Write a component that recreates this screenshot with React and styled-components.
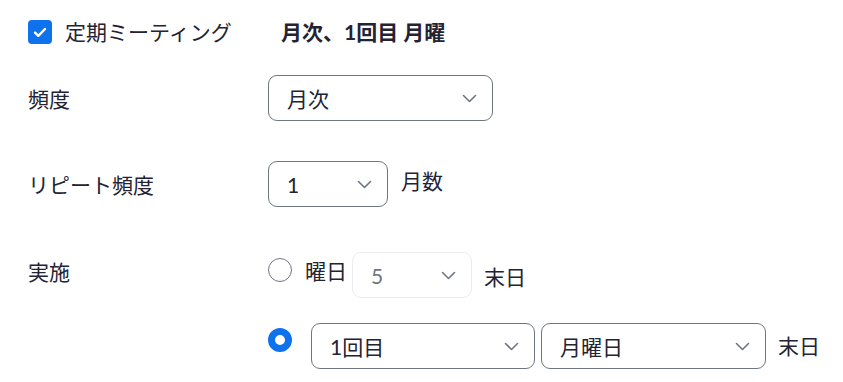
import React from "react";
import styled, { createGlobalStyle } from "styled-components";

const Global = createGlobalStyle`
  html, body { margin: 0; padding: 0; background: #ffffff; }
  body {
    font-family: Lato, "Noto Sans CJK JP", "Noto Sans", sans-serif;
    color: #232333;
    -webkit-font-smoothing: antialiased;
  }
`;

const FS = 21;

const Page = styled.div`
  padding: 20px 0 0 28px;
  display: flex;
  flex-direction: column;
`;

const TopRow = styled.div`
  display: flex;
  align-items: center;
  height: 24px;
`;

const CheckGroup = styled.label`
  display: flex;
  align-items: center;
  width: 253px;
  gap: 13px;
  font-size: ${FS}px;
  line-height: 24px;
`;

const CheckBox = styled.span`
  width: 24px;
  height: 24px;
  border-radius: 4px;
  background: #0e72ed;
  display: flex;
  align-items: center;
  justify-content: center;
  flex-shrink: 0;
`;

const Summary = styled.span`
  font-size: ${FS}px;
  font-weight: 700;
  line-height: 24px;
`;

const FormRow = styled.div`
  display: flex;
  align-items: flex-start;
  margin-top: ${(p) => p.$top}px;
`;

const Label = styled.div`
  width: 240px;
  flex-shrink: 0;
  font-size: ${FS}px;
  line-height: 28px;
  margin-top: ${(p) => p.$offset || 0}px;
`;

const Content = styled.div`
  display: flex;
  flex-direction: column;
  gap: 25px;
`;

const Line = styled.div`
  display: flex;
  align-items: flex-start;
`;

const SelectBox = styled.div`
  box-sizing: border-box;
  width: ${(p) => p.$w}px;
  height: 46px;
  border: 1px solid ${(p) => (p.$disabled ? "#ececf0" : "#6e7680")};
  border-radius: 9px;
  display: flex;
  align-items: center;
  justify-content: space-between;
  padding: 0 15px 0 18px;
  font-size: ${FS}px;
  color: ${(p) => (p.$disabled ? "#6e7680" : "#232333")};
  margin-right: ${(p) => p.$mr || 0}px;
  flex-shrink: 0;
`;

const Text = styled.span`
  font-size: ${FS}px;
  line-height: 28px;
  margin-top: ${(p) => p.$top || 0}px;
  margin-right: ${(p) => p.$mr || 0}px;
  white-space: nowrap;
`;

const Radio = styled.span`
  box-sizing: border-box;
  width: 24px;
  height: 24px;
  border-radius: 50%;
  flex-shrink: 0;
  border: ${(p) => (p.$checked ? "7px solid #0e72ed" : "1.5px solid #6e7680")};
  background: #fff;
  margin-top: ${(p) => p.$top || 0}px;
  margin-right: ${(p) => p.$mr || 0}px;
`;

const Chevron = () => (
  <svg width="15" height="9" viewBox="0 0 15 9" fill="none">
    <path d="M1.5 1.5l6 6 6-6" stroke="#6e7680" strokeWidth="1.6" strokeLinecap="round" strokeLinejoin="round" />
  </svg>
);

const Select = ({ value, w, disabled, mr }) => (
  <SelectBox $w={w} $disabled={disabled} $mr={mr}>
    <span>{value}</span>
    <Chevron />
  </SelectBox>
);

export default function App() {
  return (
    <>
      <Global />
      <Page>
        <TopRow>
          <CheckGroup>
            <CheckBox>
              <svg width="14" height="11" viewBox="0 0 14 11" fill="none">
                <path d="M2 5.6l3.3 3.2L12 2" stroke="#fff" strokeWidth="2.4" strokeLinecap="round" strokeLinejoin="round" />
              </svg>
            </CheckBox>
            定期ミーティング
          </CheckGroup>
          <Summary>月次、1回目 月曜</Summary>
        </TopRow>

        <FormRow $top={31}>
          <Label $offset={10}>頻度</Label>
          <Select value="月次" w={225} />
        </FormRow>

        <FormRow $top={40}>
          <Label $offset={10}>リピート頻度</Label>
          <Line>
            <Select value="1" w={120} mr={13} />
            <Text $top={6}>月数</Text>
          </Line>
        </FormRow>

        <FormRow $top={45}>
          <Label $offset={6}>実施</Label>
          <Content>
            <Line>
              <Radio $top={6} $mr={13} />
              <Text $top={5} $mr={5}>曜日</Text>
              <Select value="5" w={120} disabled mr={12} />
              <Text $top={11}>末日</Text>
            </Line>
            <Line>
              <Radio $checked $top={5} $mr={19} />
              <Select value="1回目" w={224} mr={6} />
              <Select value="月曜日" w={225} mr={12} />
              <Text $top={9}>末日</Text>
            </Line>
          </Content>
        </FormRow>
      </Page>
    </>
  );
}
